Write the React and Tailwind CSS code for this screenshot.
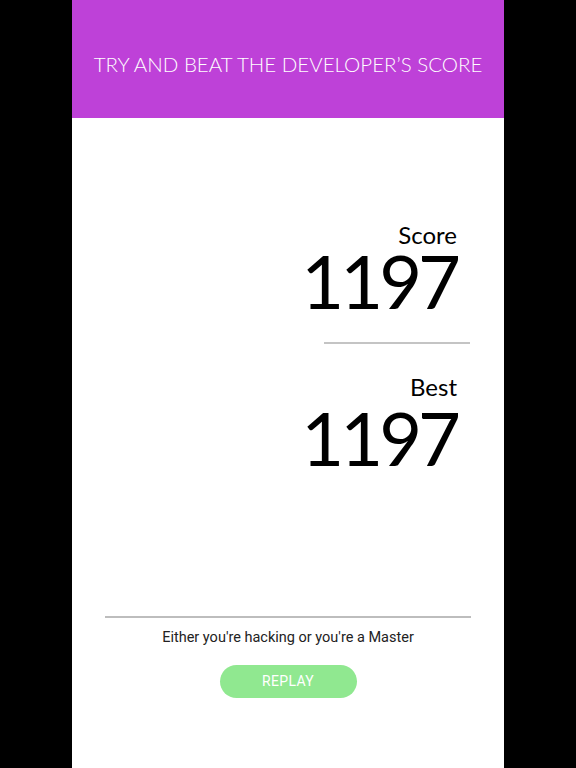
import React from 'react';

const ScoreBlock = ({ label, value, top, gap }) => (
  <div className={`flex flex-col items-end pr-[47px] ${top}`}>
    <span className="text-[24px] leading-none text-black">{label}</span>
    <span className={`text-[74px] leading-[60px] tracking-[-4px] text-black ${gap}`}>{value}</span>
  </div>
);

const App = () => {
  return (
    <div className="min-h-[768px] w-full bg-black flex justify-center" style={{ fontFamily: 'Lato, "Noto Sans", sans-serif' }}>
      <div className="w-[432px] min-h-[768px] bg-white flex flex-col">
        {/* Header */}
        <div className="h-[118px] bg-[#be41d8] flex items-center justify-center pt-[10px]">
          <h1 className="text-[20.5px] font-light leading-none text-white">
            TRY AND BEAT THE DEVELOPER’S SCORE
          </h1>
        </div>

        <ScoreBlock label="Score" value="1197" top="mt-[105px]" gap="mt-[4px]" />

        <div className="mt-[31px] ml-[252px] mr-[34px] h-[2px] bg-[#c4c4c4]" />

        <ScoreBlock label="Best" value="1197" top="mt-[31px]" gap="mt-[9px]" />

        {/* Footer */}
        <div className="mt-[148px] mx-[33px] h-[2px] bg-[#bdbdbd]" />
        <p
          className="mt-[10px] text-center text-[14.5px] leading-[20px] text-[#222]"
          style={{ fontFamily: 'Roboto, sans-serif' }}
        >
          Either you're hacking or you're a Master
        </p>
        <div className="mt-[17px] flex justify-center">
          <button
            className="w-[137px] h-[33px] rounded-full bg-[#90e890] text-white text-[14px] tracking-[0.3px]"
            style={{ fontFamily: 'Roboto, sans-serif' }}
          >
            REPLAY
          </button>
        </div>
      </div>
    </div>
  );
};

export default App;
